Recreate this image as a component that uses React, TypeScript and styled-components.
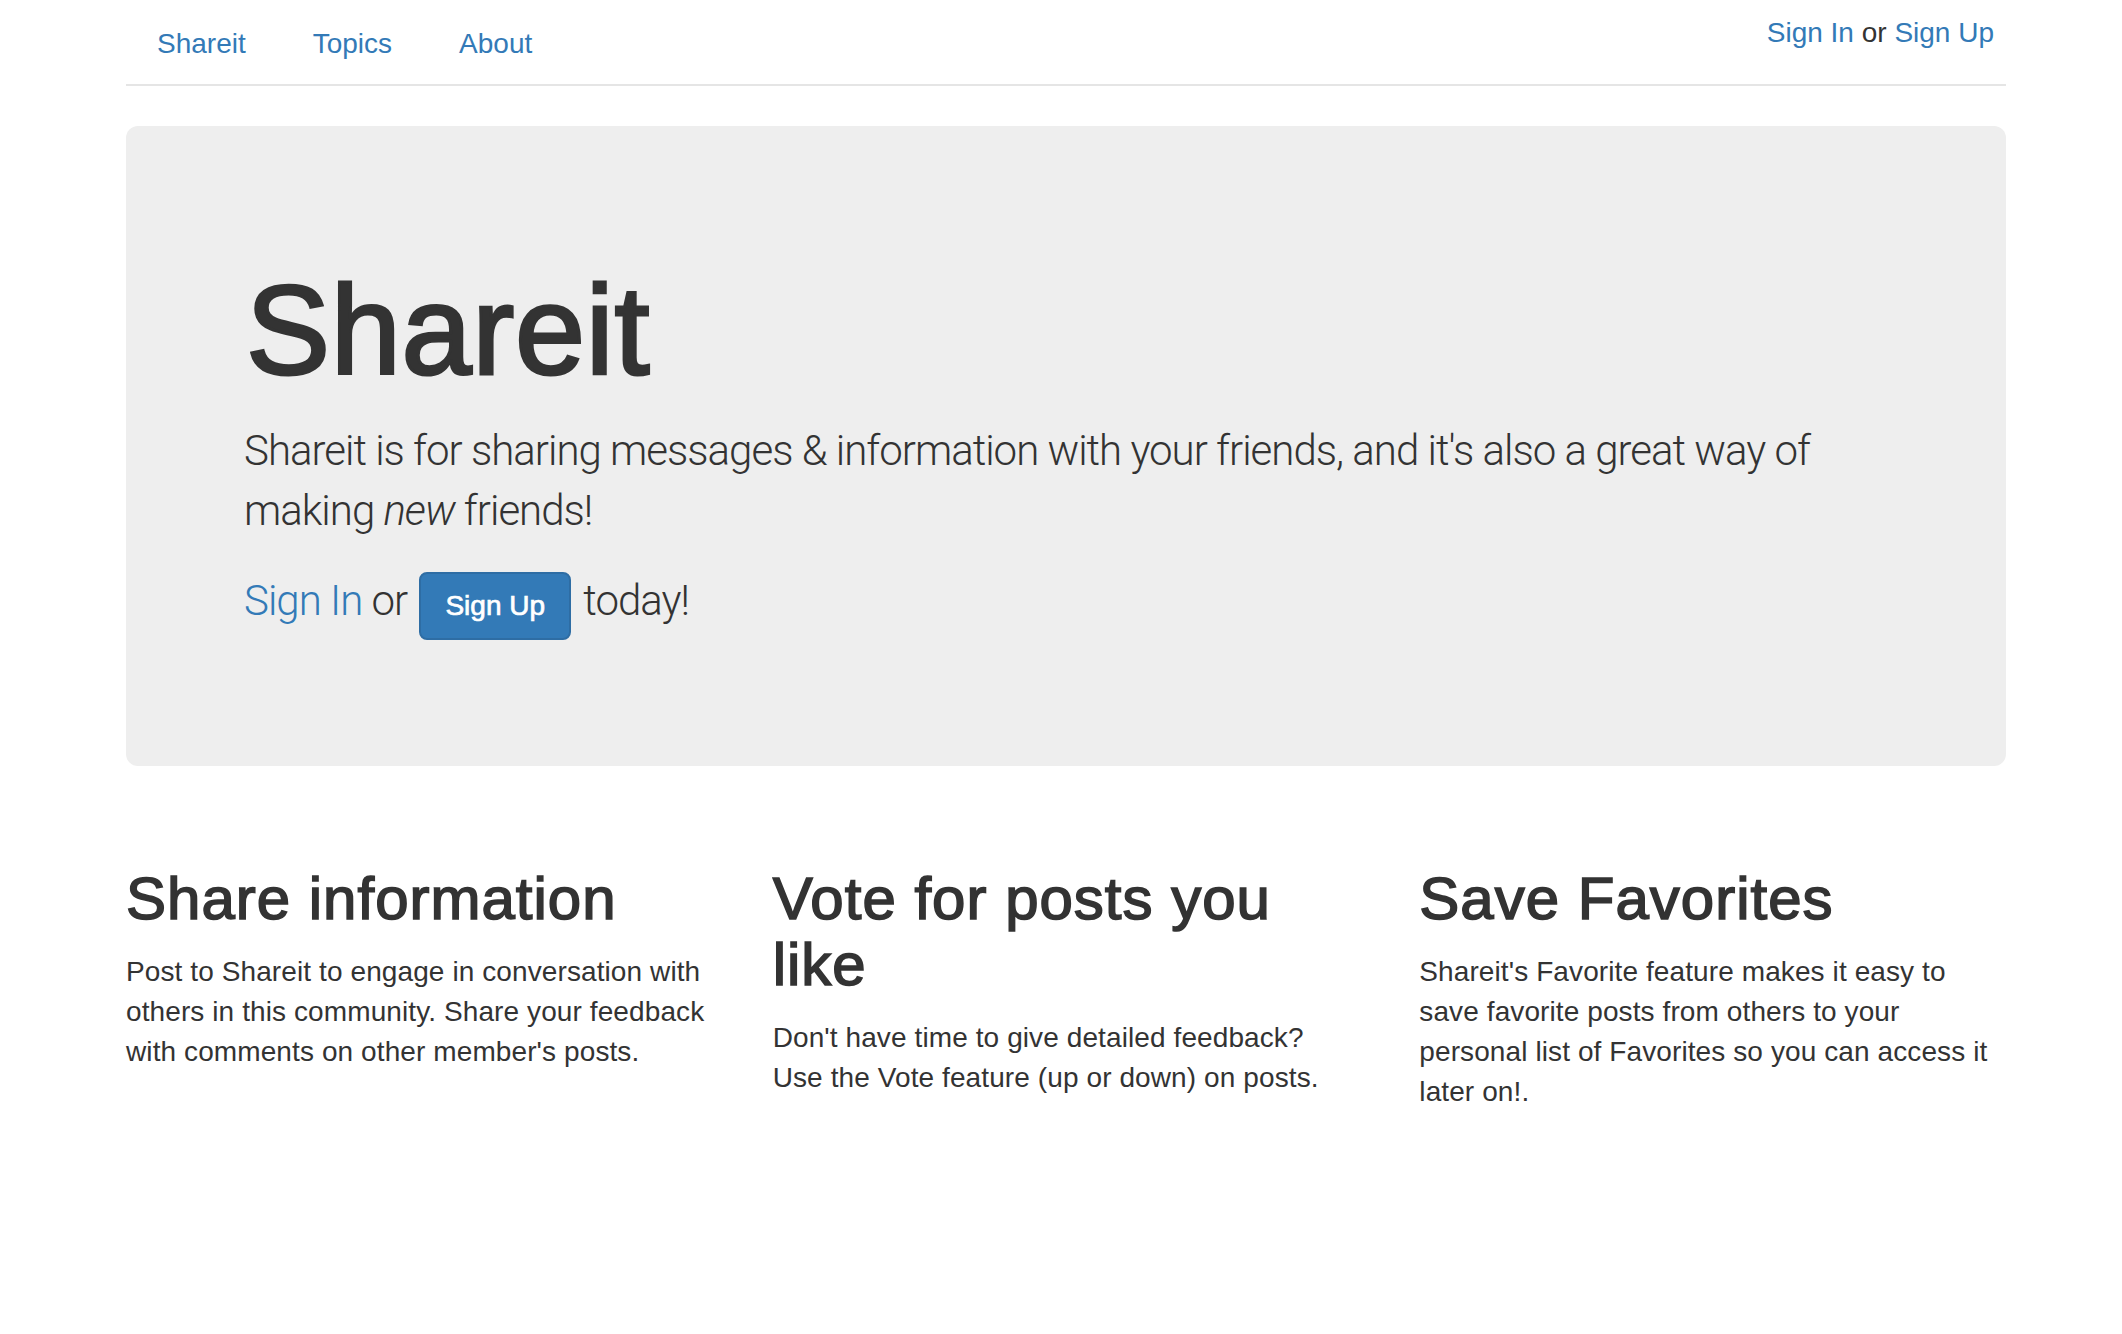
import React from 'react'
import styled, { createGlobalStyle } from 'styled-components'

const GlobalStyle = createGlobalStyle`
body {
  margin: 0;
  background: #fff;
  color: #333;
  font-family: "Liberation Sans", Arial, Helvetica, sans-serif;
  font-size: 28px;
  line-height: 40px;
}
`

const App = () => {
  return (
    <>
      <GlobalStyle />
      <Page>
        <Header>
          <Nav>
            <NavItem><NavLink href="#">Shareit</NavLink></NavItem>
            <NavItem><NavLink href="#">Topics</NavLink></NavItem>
            <NavItem><NavLink href="#">About</NavLink></NavItem>
          </Nav>
          <Account>
            <Link href="#">Sign In</Link> or <Link href="#">Sign Up</Link>
          </Account>
        </Header>

        <Jumbotron>
          <Title>Shareit</Title>
          <Lead>
            Shareit is for sharing messages &amp; information with your friends, and it's also a great way of
            making <Em>new</Em> friends!
          </Lead>
          <Lead>
            <Link href="#">Sign In</Link> or <Button href="#">Sign Up</Button> today!
          </Lead>
        </Jumbotron>

        <Features>
          <Feature>
            <FeatureTitle>Share information</FeatureTitle>
            <FeatureText>
              Post to Shareit to engage in conversation with others in this community. Share your feedback with
              comments on other member's posts.
            </FeatureText>
          </Feature>
          <Feature>
            <FeatureTitle>Vote for posts you like</FeatureTitle>
            <FeatureText>
              Don't have time to give detailed feedback? Use the Vote feature (up or down) on posts.
            </FeatureText>
          </Feature>
          <Feature>
            <FeatureTitle>Save Favorites</FeatureTitle>
            <FeatureText>
              Shareit's Favorite feature makes it easy to save favorite posts from others to your personal list of
              Favorites so you can access it later on!.
            </FeatureText>
          </Feature>
        </Features>
      </Page>
    </>
  )
}

export default App

const Page = styled.div`
padding: 0 116px 0 126px;
`

const Header = styled.header`
display: flex;
justify-content: space-between;
align-items: flex-start;
height: 84px;
border-bottom: 2px solid #e5e5e5;
`

const Nav = styled.ul`
display: flex;
gap: 7px;
list-style: none;
margin: 0;
padding: 4px 0 0 1px;
`

const NavItem = styled.li``

const NavLink = styled.a`
display: block;
padding: 20px 30px 0;
color: #337ab7;
text-decoration: none;
`

const Link = styled.a`
color: #337ab7;
text-decoration: none;
`

const Account = styled.div`
padding: 13px 12px 0 0;
`

const Jumbotron = styled.section`
margin: 40px 0 60px;
padding: 96px 120px 96px 118px;
background: #eee;
border-radius: 12px;
`

const Title = styled.h1`
margin: 40px 0 20px 2px;
font-size: 126px;
line-height: 1.1;
font-weight: 400;
letter-spacing: 0.7px;
color: #333;
-webkit-text-stroke: 3px #333;
`

const Lead = styled.p`
margin: 0 0 30px;
font-family: Roboto, "Liberation Sans", sans-serif;
font-size: 42px;
line-height: 60px;
font-weight: 300;
letter-spacing: -1px;
`

const Em = styled.em`
font-style: italic;
`

const Button = styled.a`
display: inline-block;
margin: 0 3px;
padding: 12px 24px;
font-family: "Liberation Sans", Arial, sans-serif;
font-size: 28px;
line-height: 40px;
font-weight: 400;
letter-spacing: 0;
color: #fff;
background: #337ab7;
border: 2px solid #2e6da4;
border-radius: 8px;
text-decoration: none;
-webkit-text-stroke: 0.7px #fff;
`

const Features = styled.div`
display: grid;
grid-template-columns: repeat(3, 1fr);
column-gap: 60px;
`

const Feature = styled.div``

const FeatureTitle = styled.h2`
margin: 40px 0 20px;
font-size: 60px;
line-height: 66px;
font-weight: 400;
letter-spacing: 1px;
color: #333;
-webkit-text-stroke: 1.6px #333;
`

const FeatureText = styled.p`
margin: 0 0 20px;
letter-spacing: 0.1px;
`
